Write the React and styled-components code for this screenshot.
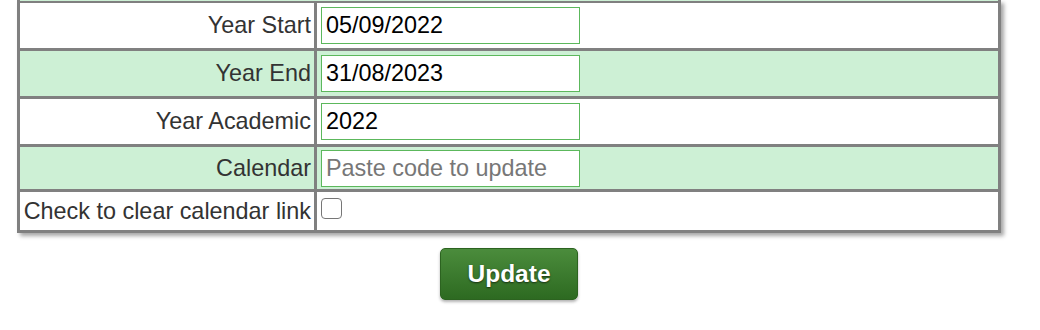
import React from "react";
import styled, { createGlobalStyle } from "styled-components";

const Global = createGlobalStyle`
  html, body { margin: 0; padding: 0; background: #fff; }
  body { font-family: "Liberation Sans", Arial, Helvetica, sans-serif; }
`;

const Page = styled.div`
  width: 1040px;
  height: 330px;
  overflow: hidden;
  padding-left: 17px;
  box-sizing: border-box;
`;

const Form = styled.form`
  width: 984px;
  display: flex;
  flex-direction: column;
  align-items: center;
  margin: 0;
`;

const Table = styled.div`
  width: 984px;
  box-sizing: border-box;
  border-left: 3px solid #808080;
  border-right: 3px solid #808080;
  border-bottom: 3px solid #808080;
  box-shadow: 3px 3px 4px rgba(0, 0, 0, 0.35);
  background: #808080;
  display: flex;
  flex-direction: column;
  gap: 3px;
`;

const TopStrip = styled.div`
  height: 1px;
  background: #cdf0d5;
  margin-bottom: -1px;
`;

const Row = styled.div`
  display: grid;
  grid-template-columns: 294px 1fr;
  column-gap: 3px;
  height: ${(p) => p.$h}px;
`;

const Label = styled.div`
  background: ${(p) => (p.$alt ? "#cdf0d5" : "#ffffff")};
  display: flex;
  align-items: center;
  justify-content: flex-end;
  padding-right: 3px;
  padding-left: 4px;
  font-size: 23.4px;
  color: #333;
  white-space: nowrap;
`;

const Field = styled.div`
  background: ${(p) => (p.$alt ? "#cdf0d5" : "#ffffff")};
  display: flex;
  align-items: ${(p) => (p.$top ? "flex-start" : "center")};
  padding-left: 4px;
  padding-top: ${(p) => (p.$top ? "6px" : "0")};
`;

const TextInput = styled.input`
  box-sizing: border-box;
  width: 259px;
  height: 37px;
  border: 1px solid #5cb85c !important;
  background: #fff;
  padding: 0 4px;
  font-family: "Liberation Sans", Arial, Helvetica, sans-serif;
  font-size: 23.4px;
  color: #000;
  outline: none;
  &::placeholder { color: #777; }
`;

const Check = styled.span`
  display: inline-block;
  box-sizing: border-box;
  width: 21px;
  height: 21px;
  border: 1.5px solid #767676;
  border-radius: 4px;
  background: #fff;
`;

const Button = styled.button`
  margin-top: 15px;
  width: 138px;
  height: 52px;
  border: 1px solid #2c6320;
  border-radius: 5px;
  background: linear-gradient(to bottom, #4b8c3c, #2d6a21);
  box-shadow: 0 2px 3px rgba(0, 0, 0, 0.3);
  color: #fff;
  font-family: "Liberation Sans", Arial, Helvetica, sans-serif;
  font-weight: bold;
  font-size: 24.5px;
  text-shadow: 0 1px 2px rgba(0, 0, 0, 0.6);
  cursor: pointer;
  padding: 0;
`;

const rows = [
  { label: "Year Start", value: "05/09/2022", alt: false },
  { label: "Year End", value: "31/08/2023", alt: true },
  { label: "Year Academic", value: "2022", alt: false },
  { label: "Calendar", placeholder: "Paste code to update", alt: true },
];

export default function App() {
  return (
    <Page>
      <Global />
      <Form onSubmit={(e) => e.preventDefault()}>
        <Table>
          <TopStrip />
          {rows.map((r, i) => (
            <Row key={r.label} $h={i === 3 ? 42 : 45}>
              <Label $alt={r.alt}>{r.label}</Label>
              <Field $alt={r.alt}>
                <TextInput defaultValue={r.value} placeholder={r.placeholder} />
              </Field>
            </Row>
          ))}
          <Row $h={38}>
            <Label>Check to clear calendar link</Label>
            <Field $top>
              <Check />
            </Field>
          </Row>
        </Table>
        <Button type="submit">Update</Button>
      </Form>
    </Page>
  );
}
